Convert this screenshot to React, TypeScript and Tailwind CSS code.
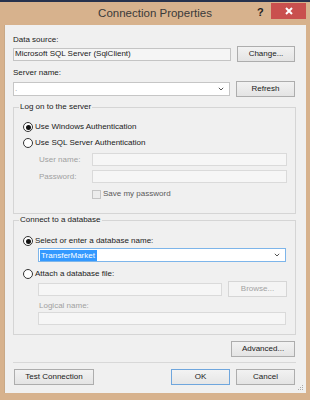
import React from "react";

const font = { fontFamily: '"Liberation Sans", Arial, sans-serif' };

function Btn({ label, w, primary = false, disabled = false }: { label: string; w: string; primary?: boolean; disabled?: boolean }) {
  const base = "h-[16px] flex items-center justify-center text-[8px] shrink-0 border";
  const tone = disabled
    ? "border-[#d6d6d6] bg-[#f4f4f4] text-[#a3a3a3]"
    : primary
      ? "border-[#6fa6dd] bg-gradient-to-b from-[#f3f3f3] to-[#e6e6e6] text-[#1a1a1a]"
      : "border-[#adadad] bg-gradient-to-b from-[#f2f2f2] to-[#e4e4e4] text-[#1a1a1a]";
  return <div className={`${base} ${tone} ${w}`}>{label}</div>;
}

function Radio({ checked, label }: { checked: boolean; label: string }) {
  return (
    <div className="h-[12px] flex items-center">
      <div className="w-[10px] h-[10px] rounded-full border border-[#333] bg-white flex items-center justify-center">
        {checked && <div className="w-[5px] h-[5px] rounded-full bg-[#111]" />}
      </div>
      <span className="ml-[2px] text-[8px] text-[#1a1a1a]">{label}</span>
    </div>
  );
}

function Chevron() {
  return (
    <svg width="6" height="4" viewBox="0 0 6 4" className="shrink-0">
      <path d="M0.8 0.8 L3 3 L5.2 0.8" fill="none" stroke="#555" strokeWidth="1" />
    </svg>
  );
}

function Group({ title, children, className }: { title: string; children: React.ReactNode; className: string }) {
  return (
    <div className={`relative border border-[#d5d5d5] ${className}`}>
      <span className="absolute left-[5px] top-[-6px] px-[1px] bg-[#f0f0f0] text-[8px] leading-[10px] text-[#1a1a1a]">{title}</span>
      {children}
    </div>
  );
}

export default function App() {
  return (
    <div style={font} className="w-[310px] h-[400px] bg-[#d7b28d] flex flex-col overflow-hidden">
      <div className="h-[2px] bg-[#27324d]" />
      <div className="h-[23px] relative flex items-center justify-center">
        <span className="text-[11.5px] text-[#3a3a3a]">Connection Properties</span>
        <span className="absolute left-[257px] top-[2px] text-[11px] font-bold text-[#222]">?</span>
        <div className="absolute left-[271px] top-[1px] w-[35px] h-[16px] bg-[#c9504e] flex items-center justify-center">
          <svg width="8" height="8" viewBox="0 0 8 8">
            <path d="M1 1 L7 7 M7 1 L1 7" stroke="#fff" strokeWidth="2" />
          </svg>
        </div>
      </div>
      <div className="relative mx-[4px] h-[368px] bg-[#f0f0f0] border-l border-[#c9a987] pl-[8px] pr-[10px] flex flex-col">
        <div className="mt-[10px] h-[10px] flex items-center text-[8px] text-[#1a1a1a]">Data source:</div>
        <div className="mt-[1px] h-[16px] flex items-center">
          <div className="w-[218px] h-[13px] border border-[#c4c4c4] bg-[#f5f5f5] flex items-center px-[1px] text-[8px] text-[#1a1a1a]">
            Microsoft SQL Server (SqlClient)
          </div>
          <div className="ml-[6px]"><Btn label="Change..." w="w-[58px]" /></div>
        </div>
        <div className="mt-[6px] h-[10px] flex items-center text-[8px] text-[#1a1a1a]">Server name:</div>
        <div className="mt-[3px] h-[16px] flex items-center">
          <div className="w-[217px] h-[14px] border border-[#c6c6c6] bg-white flex items-center justify-between pl-[1px] pr-[5px] text-[8px] text-[#999]">
            <span>.</span>
            <Chevron />
          </div>
          <div className="ml-[6px]"><Btn label="Refresh" w="w-[59px]" /></div>
        </div>

        <Group title="Log on to the server" className="mt-[10px] w-[283px] pt-[13px] pb-[13px] pl-[9px]">
          <Radio checked label="Use Windows Authentication" />
          <div className="mt-[4px]"><Radio checked={false} label="Use SQL Server Authentication" /></div>
          <div className="mt-[4px] h-[13px] flex items-center pl-[16px]">
            <span className="w-[53px] text-[8px] text-[#a0a0a0]">User name:</span>
            <div className="w-[195px] h-[13px] border border-[#dadada] bg-[#f6f6f6]" />
          </div>
          <div className="mt-[4px] h-[13px] flex items-center pl-[16px]">
            <span className="w-[53px] text-[8px] text-[#a0a0a0]">Password:</span>
            <div className="w-[195px] h-[13px] border border-[#dadada] bg-[#f6f6f6]" />
          </div>
          <div className="mt-[5px] h-[12px] flex items-center pl-[69px]">
            <div className="w-[9px] h-[9px] border border-[#c4c4c4] bg-[#ececec]" />
            <span className="ml-[2px] text-[8px] text-[#5a5a5a]">Save my password</span>
          </div>
        </Group>

        <Group title="Connect to a database" className="mt-[6px] w-[283px] pt-[14px] pb-[9px] pl-[9px]">
          <Radio checked label="Select or enter a database name:" />
          <div className="mt-[1px] ml-[15px] w-[248px] h-[14px] border border-[#7db5ea] bg-white flex items-center justify-between pl-[1px] pr-[5px]">
            <span className="bg-[#3399ff] text-white text-[8px] leading-[11px] px-[1px] w-[57px]">TransferMarket</span>
            <Chevron />
          </div>
          <div className="mt-[6px]"><Radio checked={false} label="Attach a database file:" /></div>
          <div className="mt-[1px] ml-[15px] h-[16px] flex items-center">
            <div className="w-[184px] h-[13px] border border-[#dadada] bg-[#f6f6f6]" />
            <div className="ml-[6px]"><Btn label="Browse..." w="w-[59px]" disabled /></div>
          </div>
          <div className="mt-[4px] ml-[16px] h-[10px] flex items-center text-[8px] text-[#a0a0a0]">Logical name:</div>
          <div className="mt-[1px] ml-[15px] w-[248px] h-[13px] border border-[#dadada] bg-[#f6f6f6]" />
        </Group>

        <div className="mt-[6px] w-[283px] flex justify-end pr-[1px]">
          <Btn label="Advanced..." w="w-[64px]" />
        </div>
        <div className="mt-[5px] w-[283px] h-[1px] bg-[#d8d8d8]" />
        <div className="mt-[6px] w-[283px] flex items-center">
          <div className="ml-[1px]"><Btn label="Test Connection" w="w-[80px]" /></div>
          <div className="ml-auto"><Btn label="OK" w="w-[59px]" primary /></div>
          <div className="ml-[6px] mr-[1px]"><Btn label="Cancel" w="w-[59px]" /></div>
        </div>
        <svg width="6" height="6" viewBox="0 0 6 6" className="absolute right-[2px] bottom-[2px]">
          <rect x="4" y="0" width="1" height="1" fill="#aaa" />
          <rect x="2" y="2" width="1" height="1" fill="#aaa" />
          <rect x="4" y="2" width="1" height="1" fill="#aaa" />
          <rect x="0" y="4" width="1" height="1" fill="#aaa" />
          <rect x="2" y="4" width="1" height="1" fill="#aaa" />
          <rect x="4" y="4" width="1" height="1" fill="#aaa" />
        </svg>
      </div>
    </div>
  );
}
